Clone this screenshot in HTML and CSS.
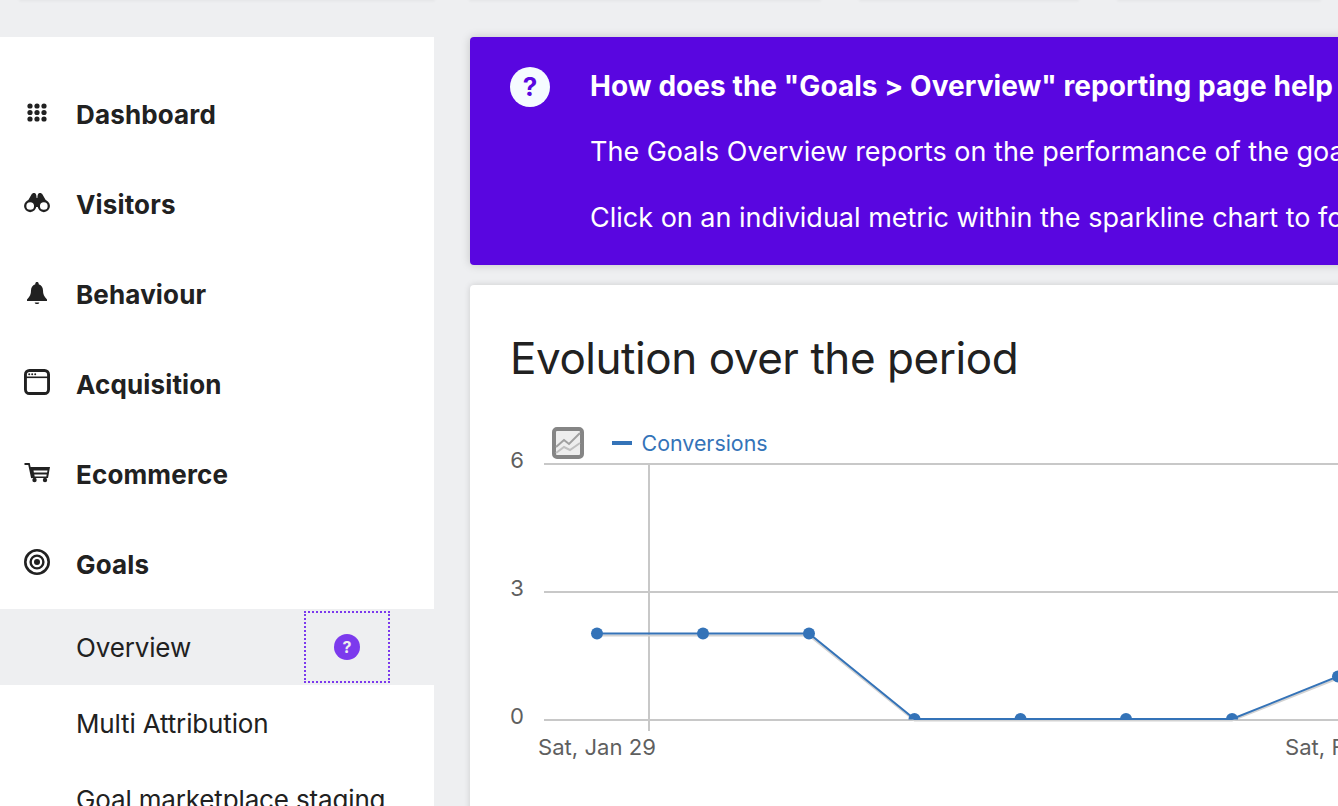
FILE: index.html
```html
<!DOCTYPE html>
<html lang="en">
<head>
<meta charset="utf-8">
<title>Goals Overview</title>
<link rel="stylesheet" href="styles.css">
</head>
<body>
<div class="page">
  <div class="topstrip">
    <div class="stub stub-a"></div>
    <div class="stub stub-b"></div>
    <div class="stub stub-c"></div>
    <div class="stub stub-d"></div>
  </div>
  <div class="columns">
    <nav class="sidebar">
      <a class="nav-item">
        <span class="nav-icon"><svg width="26" height="26" viewBox="0 0 26 26"><g fill="#212121"><circle cx="6" cy="7" r="2.600"/><circle cx="13" cy="7" r="2.600"/><circle cx="20" cy="7" r="2.600"/><circle cx="6" cy="13.500" r="2.600"/><circle cx="13" cy="13.500" r="2.600"/><circle cx="20" cy="13.500" r="2.600"/><circle cx="6" cy="20" r="2.600"/><circle cx="13" cy="20" r="2.600"/><circle cx="20" cy="20" r="2.600"/></g></svg></span>
        <span class="nav-label">Dashboard</span>
      </a>
      <a class="nav-item">
        <span class="nav-icon"><svg width="26" height="26" viewBox="0 0 26 26"><path fill="#212121" d="M2 15 7.500 5.500C8 4.500 9 4 10 4c1.500 0 2.500 1 2.600 5h.8c.1-4 1.100-5 2.600-5 1 0 2 .5 2.500 1.500L24 15v3H2z"/><circle cx="6.200" cy="17" r="5" fill="#fff" stroke="#212121" stroke-width="2.300"/><circle cx="19.800" cy="17" r="5" fill="#fff" stroke="#212121" stroke-width="2.300"/></svg></span>
        <span class="nav-label">Visitors</span>
      </a>
      <a class="nav-item">
        <span class="nav-icon"><svg width="26" height="26" viewBox="0 0 26 26"><path fill="#212121" d="M13 3c1 0 1.700.7 1.700 1.700v.6c3 .9 4.300 3.400 4.300 6.300 0 3.800 1 6 4 9v1.400H3v-1.400c3-3 4-5.200 4-9 0-2.900 1.300-5.400 4.300-6.300v-.6C11.300 3.700 12 3 13 3zM10.700 23.400h4.600c-.2 1-1.100 1.600-2.300 1.600s-2.100-.6-2.300-1.600z"/></svg></span>
        <span class="nav-label">Behaviour</span>
      </a>
      <a class="nav-item">
        <span class="nav-icon"><svg width="26" height="26" viewBox="0 0 26 26"><rect x="1.450" y="1.450" width="23.100" height="23.100" rx="4" fill="none" stroke="#212121" stroke-width="2.900"/><rect x="1.500" y="7.500" width="23" height="1.600" fill="#212121"/><g fill="#212121"><circle cx="5.200" cy="5.200" r="1"/><circle cx="8.200" cy="5.200" r="1"/><circle cx="11.200" cy="5.200" r="1"/></g></svg></span>
        <span class="nav-label">Acquisition</span>
      </a>
      <a class="nav-item">
        <span class="nav-icon"><svg width="26" height="26" viewBox="0 0 26 26"><path fill="none" stroke="#212121" stroke-width="1.800" d="M.5 5H5l3 14"/><path fill="#212121" d="M6 8h20l-2 11H8z"/><path fill="#fff" d="M9.500 11.500h14l-.4 2H9.900zM10.300 15.500h12.400l-.4 2H10.700z"/><circle cx="10.500" cy="21" r="2.200" fill="#212121"/><circle cx="21" cy="21" r="2.200" fill="#212121"/></svg></span>
        <span class="nav-label">Ecommerce</span>
      </a>
      <a class="nav-item">
        <span class="nav-icon"><svg width="26" height="26" viewBox="0 0 26 26"><circle cx="13" cy="13" r="11.700" fill="none" stroke="#212121" stroke-width="2.600"/><circle cx="13" cy="13" r="6.400" fill="none" stroke="#212121" stroke-width="2.400"/><circle cx="13" cy="13" r="3" fill="#212121"/></svg></span>
        <span class="nav-label">Goals</span>
      </a>
      <a class="sub-item sub-active">
        <span class="sub-label">Overview</span>
        <span class="help-box"><span class="help-dot">?</span></span>
      </a>
      <a class="sub-item"><span class="sub-label">Multi Attribution</span></a>
      <a class="sub-item"><span class="sub-label">Goal marketplace staging</span></a>
    </nav>
    <main class="main">
      <section class="banner">
        <span class="banner-icon">?</span>
        <div class="banner-body">
          <p class="banner-title">How does the "Goals &gt; Overview" reporting page help me?</p>
          <p class="banner-line">The Goals Overview reports on the performance of the goals set up for this website.</p>
          <p class="banner-line">Click on an individual metric within the sparkline chart to focus on it in the evolution chart above.</p>
        </div>
      </section>
      <section class="card">
        <h2 class="card-title">Evolution over the period</h2>
        <svg class="chart" width="868" height="340" viewBox="470 425 868 340">
          <defs>
            <clipPath id="plot"><rect x="470" y="425" width="868" height="294.500"/></clipPath>
          </defs>
          <g stroke="#c8c8c8" stroke-width="2" fill="none">
            <path d="M544 464H1338M544 592H1338M544 720H1338"/>
            <path d="M649 464V731"/>
          </g>
          <path d="M597 635.500H809L914.500 720.500H1232L1338 678.500" fill="none" stroke="#d2d2d2" stroke-width="2"/>
          <path d="M597 633.500H809L914.500 719H1232L1338 676.500" fill="none" stroke="#3473b8" stroke-width="2"/>
          <g fill="#3473b8" clip-path="url(#plot)">
            <circle cx="597" cy="633.500" r="6"/><circle cx="703" cy="633.500" r="6"/><circle cx="809" cy="633.500" r="6"/>
            <circle cx="914.500" cy="719" r="6"/><circle cx="1020.500" cy="719" r="6"/><circle cx="1126" cy="719" r="6"/><circle cx="1232" cy="719" r="6"/><circle cx="1338" cy="676.500" r="6"/>
          </g>
          <rect x="554" y="429" width="28" height="28" rx="3" fill="#eeeeee" stroke="#858585" stroke-width="4"/>
          <path d="M556 447l8-7 5 4 11-11" fill="none" stroke="#a0a0a0" stroke-width="2"/>
          <path d="M556 453l8-6 6 3 10-7" fill="none" stroke="#c0c0c0" stroke-width="2"/>
          <rect x="612" y="441" width="20" height="4" fill="#3473b8"/>
          <text class="legend-text" x="641.500" y="450.500">Conversions</text>
          <text class="axis-text" x="524" y="468" text-anchor="end">6</text>
          <text class="axis-text" x="524" y="596" text-anchor="end">3</text>
          <text class="axis-text" x="524" y="724" text-anchor="end">0</text>
          <text class="axis-text" x="538" y="755">Sat, Jan 29</text>
          <text class="axis-text" x="1285" y="755">Sat, Feb 5</text>
        </svg>
      </section>
    </main>
  </div>
</div>
</body>
</html>
```
FILE: styles.css
```css
html, body {
  margin: 0;
  height: 806px;
  overflow: hidden;
  background: #eeeff1;
}
body {
  font-family: Inter, "Liberation Sans", sans-serif;
  color: #212121;
}
.page {
  width: 1338px;
  height: 806px;
  overflow: hidden;
}
.topstrip {
  display: flex;
  height: 37px;
}
.stub {
  height: 0;
  box-shadow: 0 0 3px 1px rgba(0, 0, 0, .06);
}
.stub-a { width: 414px; margin-left: 20px; }
.stub-b { width: 350px; margin-left: 36px; }
.stub-c { width: 218px; margin-left: 40px; }
.stub-d { width: 202px; margin-left: 40px; }
.columns {
  display: flex;
  align-items: flex-start;
  gap: 36px;
}
.sidebar {
  flex: none;
  width: 434px;
  height: 769px;
  padding-top: 32px;
  box-sizing: border-box;
  background: #fff;
  overflow: hidden;
}
.nav-item {
  display: flex;
  align-items: center;
  height: 90px;
  padding-left: 24px;
}
.nav-icon {
  display: flex;
  width: 26px;
  height: 26px;
  margin: 0 26px 4px 0;
}
.nav-label {
  font-size: 26px;
  font-weight: 700;
  letter-spacing: .15px;
  white-space: nowrap;
}
.sub-item {
  display: flex;
  align-items: center;
  justify-content: space-between;
  height: 76px;
  padding: 0 44px 0 76px;
}
.sub-active { background: #eeeff1; }
.sub-label {
  font-size: 26px;
  letter-spacing: -.15px;
  white-space: nowrap;
}
.help-box {
  display: flex;
  align-items: center;
  justify-content: center;
  width: 82px;
  height: 68px;
  border: 2px dotted #7c3aed;
}
.help-dot {
  width: 26px;
  height: 26px;
  border-radius: 50%;
  background: #7c3aed;
  color: #eee;
  font-size: 16px;
  font-weight: 700;
  line-height: 26px;
  text-align: center;
}
.main {
  flex: none;
  width: 1000px;
  display: flex;
  flex-direction: column;
  gap: 20px;
}
.banner {
  display: flex;
  height: 228px;
  box-sizing: border-box;
  padding: 30px 0 0 40px;
  background: #5906e0;
  border-radius: 4px;
  color: #fff;
  box-shadow: 0 0 10px rgba(0, 0, 0, .18);
  white-space: nowrap;
}
.banner-icon {
  flex: none;
  width: 40px;
  height: 40px;
  border-radius: 50%;
  background: #f5fbff;
  color: #5906e0;
  font-size: 26px;
  font-weight: 700;
  line-height: 40px;
  text-align: center;
  margin-right: 40px;
}
.banner-body p {
  margin: 0 0 27px;
  font-size: 27px;
  line-height: 39px;
}
.banner-body .banner-title {
  margin-bottom: 26px;
  font-size: 28px;
  font-weight: 700;
  letter-spacing: .06px;
}
.card {
  height: 600px;
  background: #fff;
  border-radius: 4px;
  padding: 40px 0 0 40px;
  box-shadow: 0 0 6px rgba(0, 0, 0, .15);
}
.card-title {
  margin: 0;
  font-size: 44px;
  font-weight: 400;
  letter-spacing: -.45px;
  line-height: 66px;
  white-space: nowrap;
}
.chart {
  display: block;
  margin: 34px 0 0 -40px;
}
.legend-text {
  font-family: Inter, "Liberation Sans", sans-serif;
  font-size: 21.4px;
  fill: #3473b8;
}
.axis-text {
  font-family: Inter, "Liberation Sans", sans-serif;
  font-size: 22.1px;
  fill: #5f5f5f;
}
```
